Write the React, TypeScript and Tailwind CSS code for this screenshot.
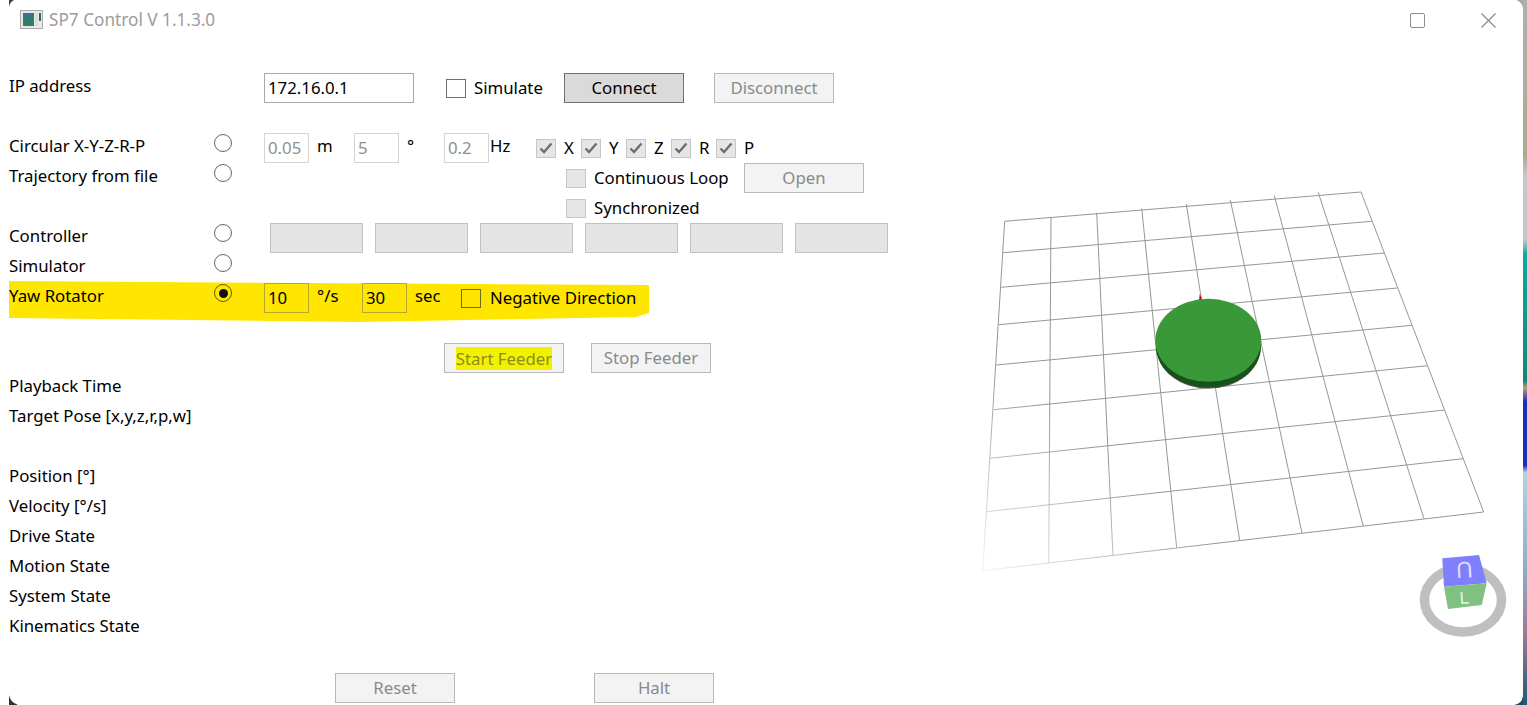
import type { ReactNode } from 'react'

// grid corners of the floor, measured on the reference
const leftEdge = [[1004.7, 221.3], [1003, 252.7], [1001.3, 287.3], [999, 324.7], [996.3, 365], [993.7, 409.7], [990, 458.3], [987, 511.7], [982.7, 570.7]]
const rightEdge = [[1361, 192], [1371.7, 221.3], [1384.3, 253], [1397.3, 288], [1412, 325.3], [1427.3, 365.7], [1444.7, 410], [1463, 458.7], [1483.7, 512]]
const topEdge = [[1004.7, 221.3], [1051, 217], [1096.7, 212.7], [1141.7, 208.3], [1186.3, 204], [1230.3, 200], [1274.3, 195.7], [1318.3, 192.5], [1361, 192]]
const bottomEdge = [[982.7, 570.7], [1048.7, 563], [1113, 556], [1176.7, 548], [1239.7, 540.5], [1302, 533], [1363.3, 526], [1424, 518.5], [1483.7, 512]]

function Row({ label, radio, children }: { label?: string; radio?: 'on' | 'off'; children?: ReactNode }) {
  return (
    <div className="relative flex h-[30px] items-center pl-[9px]">
      <span className="relative mb-[1px] w-[205px] whitespace-nowrap">{label}</span>
      <div className="w-[50px]">
        {radio && <Radio checked={radio === 'on'} />}
      </div>
      <div className="relative mt-[4px] flex items-center">{children}</div>
    </div>
  )
}

function Radio({ checked }: { checked: boolean }) {
  return (
    <div className="relative mb-[6px] flex h-[18px] w-[18px] items-center justify-center rounded-full border-[1.5px] border-black/60">
      {checked && <div className="h-[9px] w-[9px] rounded-full bg-[#111]" />}
    </div>
  )
}

function Field({ value, w = 'w-[45px]', tone = 'off' }: { value: string; w?: string; tone?: 'on' | 'off' | 'mark' }) {
  const cls =
    tone === 'on'
      ? 'border-[#a8a8a8] text-black'
      : tone === 'mark'
        ? 'border-[#b3a82c] text-black'
        : 'border-[#d4d4d4] text-[#8f8f8f]'
  return <div className={`flex h-[30px] ${w} items-center border-[1.5px] pl-[3px] ${cls}`}>{value}</div>
}

function Unit({ children, w, pl = 'pl-[8px]' }: { children: string; w: string; pl?: string }) {
  return <span className={`${w} mb-[4px] whitespace-nowrap ${pl}`}>{children}</span>
}

function Check({ checked, tone = 'off' }: { checked?: boolean; tone?: 'on' | 'off' | 'mark' }) {
  const cls =
    tone === 'on'
      ? 'border-[#707070] bg-white'
      : tone === 'mark'
        ? 'border-[#6f6a1a] bg-transparent'
        : 'border-[#c6c6c6] bg-[#e6e6e6]'
  return (
    <div className={`flex h-[19px] w-[20px] shrink-0 items-center justify-center border-[1.5px] ${cls}`}>
      {checked && (
        <svg width="14" height="12" viewBox="0 0 14 12">
          <path d="M1.5 6.5 L5 10 L12.5 1.5" fill="none" stroke="#6e6e6e" strokeWidth="2.4" />
        </svg>
      )}
    </div>
  )
}

function Axis({ name }: { name: string }) {
  return (
    <div className="flex w-[45px] items-center">
      <Check checked />
      <span className="pl-[8px]">{name}</span>
    </div>
  )
}

function Btn({ children, active }: { children: ReactNode; active?: boolean }) {
  return (
    <div
      className={
        active
          ? 'flex h-[30px] w-[120px] shrink-0 items-center justify-center border-[1.5px] border-[#707070] bg-[#dadada] text-black'
          : 'flex h-[30px] w-[120px] shrink-0 items-center justify-center border-[1.5px] border-[#b8b8b8] bg-[#f3f3f3] text-[#8a8a8a]'
      }
    >
      {children}
    </div>
  )
}

function BlankBtn() {
  return <div className="h-[30px] w-[93px] border-[1.5px] border-[#c2c2c2] bg-[#e4e4e4]" />
}

function FloorView() {
  return (
    <svg className="h-[665px] w-[553px]" viewBox="970 40 553 665">
      <defs>
        <linearGradient id="fade" gradientUnits="userSpaceOnUse" x1="985" y1="570" x2="1090" y2="440">
          <stop offset="0" stopColor="#f2f2f2" />
          <stop offset="1" stopColor="#969696" />
        </linearGradient>
      </defs>
      {leftEdge.map((p, i) => (
        <line key={i} x1={p[0]} y1={p[1]} x2={rightEdge[i][0]} y2={rightEdge[i][1]} stroke="url(#fade)" strokeWidth="1" />
      ))}
      {topEdge.map((p, i) => (
        <line key={i} x1={p[0]} y1={p[1]} x2={bottomEdge[i][0]} y2={bottomEdge[i][1]} stroke="url(#fade)" strokeWidth="1" />
      ))}
      <path d="M1199 301 L1199.8 293.5 L1202.5 301 Z" fill="#d40000" />
      <ellipse cx="1208.5" cy="347.5" rx="52" ry="41" fill="#555555" />
      <ellipse cx="1208.5" cy="346.5" rx="52.5" ry="41" fill="#17511b" />
      <ellipse cx="1208.3" cy="340.3" rx="53" ry="41.5" fill="#399838" />
      <ellipse cx="1463" cy="600" rx="38.5" ry="32" fill="none" stroke="#bfbfbf" strokeWidth="9.5" />
      <polygon points="1442.3,558.3 1479,555 1486.7,583.3 1444,586.7" fill="#8080ff" />
      <polygon points="1444,586.7 1486.7,583.3 1481.7,605 1448,609" fill="#80c080" />
      <text x="0" y="0" transform="translate(1464 562) rotate(177)" textAnchor="middle" fontFamily="Liberation Sans" fontSize="23" fill="#dcdcff">U</text>
      <text x="1460" y="604" transform="rotate(-4 1460 604)" fontFamily="Liberation Sans" fontSize="17" fill="#e4f4e4">L</text>
    </svg>
  )
}

export default function App() {
  return (
    <div className="flex h-[705px] w-[1527px] overflow-hidden bg-white font-['Noto_Sans',sans-serif] text-[16.8px] text-black">
      <div className="relative flex min-w-0 flex-1 flex-col">
        {/* window corners, the desktop shows through */}
        <svg className="absolute left-[9px] top-0" width="8" height="8" viewBox="0 0 8 8">
          <path d="M0 0 H5 Q1 2 0 7 Z" fill="#444" />
        </svg>
        <svg className="absolute bottom-0 left-[9px]" width="9" height="10" viewBox="0 0 9 10">
          <path d="M0 0 Q1 7 9 10 H0 Z" fill="#333" />
        </svg>
        <svg className="absolute right-0 top-0" width="7" height="8" viewBox="0 0 7 8">
          <path d="M0 0 H7 V8 Q6 2 0 0 Z" fill="#a8a8a8" />
        </svg>
        <svg className="absolute bottom-0 right-0" width="9" height="9" viewBox="0 0 9 9">
          <path d="M9 0 V9 H0 Q8 8 9 0 Z" fill="#1d4a5c" />
        </svg>

        {/* title bar */}
        <div className="flex h-[40px] shrink-0 items-center pl-[20px]">
          <svg width="23" height="19" viewBox="0 0 23 19" className="mb-[1px]">
            <rect x="0.5" y="0.5" width="22" height="18" fill="#e8e8e8" stroke="#a9a9a9" />
            <rect x="3" y="3" width="11" height="13" fill="#2f7f6a" />
            <rect x="3" y="3" width="11" height="5" fill="#3f6f8f" />
            <rect x="15" y="3" width="3" height="13" fill="#d8e0dc" />
            <rect x="19" y="3" width="2" height="8" fill="#2d6a5a" />
          </svg>
          <span className="pl-[6px] text-[17.2px] text-[#9c9c9c]">SP7 Control V 1.1.3.0</span>
          <div className="ml-auto flex items-center">
            <div className="h-[15px] w-[15px] rounded-[2px] border-[1.5px] border-[#8e8e8e]" />
            <svg className="ml-[56px] mr-[27px]" width="15" height="15" viewBox="0 0 15 15">
              <path d="M0.5 0.5 L14.5 14.5 M14.5 0.5 L0.5 14.5" stroke="#8a8a8a" strokeWidth="1.2" />
            </svg>
          </div>
        </div>

        <div className="flex min-h-0 flex-1">
          <div className="w-[970px] shrink-0 pt-[31px]">
            <Row label="IP address">
              <Field value="172.16.0.1" w="w-[150px]" tone="on" />
              <div className="ml-[32px] flex w-[118px] items-center">
                <Check tone="on" />
                <span className="pl-[8px]">Simulate</span>
              </div>
              <Btn active>Connect</Btn>
              <div className="ml-[30px]">
                <Btn>Disconnect</Btn>
              </div>
            </Row>
            <div className="h-[30px]" />
            <Row label="Circular X-Y-Z-R-P" radio="off">
              <Field value="0.05" />
              <Unit w="w-[45px]">m</Unit>
              <Field value="5" />
              <Unit w="w-[45px]">°</Unit>
              <Field value="0.2" />
              <Unit w="w-[47px]" pl="pl-[1px]">Hz</Unit>
              <Axis name="X" />
              <Axis name="Y" />
              <Axis name="Z" />
              <Axis name="R" />
              <Axis name="P" />
            </Row>
            <Row label="Trajectory from file" radio="off">
              <div className="ml-[302px] flex w-[178px] items-center">
                <Check />
                <span className="whitespace-nowrap pl-[8px]">Continuous Loop</span>
              </div>
              <Btn>Open</Btn>
            </Row>
            <Row>
              <div className="ml-[302px] flex items-center">
                <Check />
                <span className="pl-[8px]">Synchronized</span>
              </div>
            </Row>
            <Row label="Controller" radio="off">
              <div className="ml-[6px] flex gap-[12px]">
                <BlankBtn />
                <BlankBtn />
                <BlankBtn />
                <BlankBtn />
                <BlankBtn />
                <BlankBtn />
              </div>
            </Row>
            <Row label="Simulator" radio="off" />
            <div className="relative">
              {/* marker pen highlight over the row */}
              <svg className="absolute left-[9px] top-0" width="645" height="45" viewBox="0 0 645 45">
                <path d="M0 0 L300 2 L640 4 L640 32 L627 36 L350 41 L260 40 L0 37 Z" fill="#ffe600" />
              </svg>
              <Row label="Yaw Rotator" radio="on">
                <Field value="10" tone="mark" />
                <Unit w="w-[53px]">°/s</Unit>
                <Field value="30" tone="mark" />
                <Unit w="w-[54px]">sec</Unit>
                <Check tone="mark" />
                <span className="whitespace-nowrap pl-[9px]">Negative Direction</span>
              </Row>
            </div>
            <div className="h-[30px]" />
            <Row>
              <div className="ml-[180px] flex gap-[27px]">
                <Btn>
                  <span className="bg-[#f2f200] leading-[23px] text-[#8c8c1e]">Start Feeder</span>
                </Btn>
                <Btn>Stop Feeder</Btn>
              </div>
            </Row>
            <Row label="Playback Time" />
            <Row label="Target Pose [x,y,z,r,p,w]" />
            <div className="h-[30px]" />
            <Row label="Position [°]" />
            <Row label="Velocity [°/s]" />
            <Row label="Drive State" />
            <Row label="Motion State" />
            <Row label="System State" />
            <Row label="Kinematics State" />
            <div className="h-[30px]" />
            <Row>
              <div className="ml-[71px] flex gap-[139px]">
                <Btn>Reset</Btn>
                <Btn>Halt</Btn>
              </div>
            </Row>
          </div>
          <FloorView />
        </div>
      </div>
      {/* sliver of desktop wallpaper */}
      <div className="h-full w-[4px] shrink-0 bg-[linear-gradient(to_bottom,#b0b0ac_0,#b3a690_22%,#c4c8c8_25%,#c0c8c8_34%,#10a8a0_36%,#108878_54%,#c09870_55%,#1830b8_57%,#1830b8_66%,#b8d0e0_67%,#90b0c8_80%,#a07890_90%,#1d5a78_100%)]" />
    </div>
  )
}
